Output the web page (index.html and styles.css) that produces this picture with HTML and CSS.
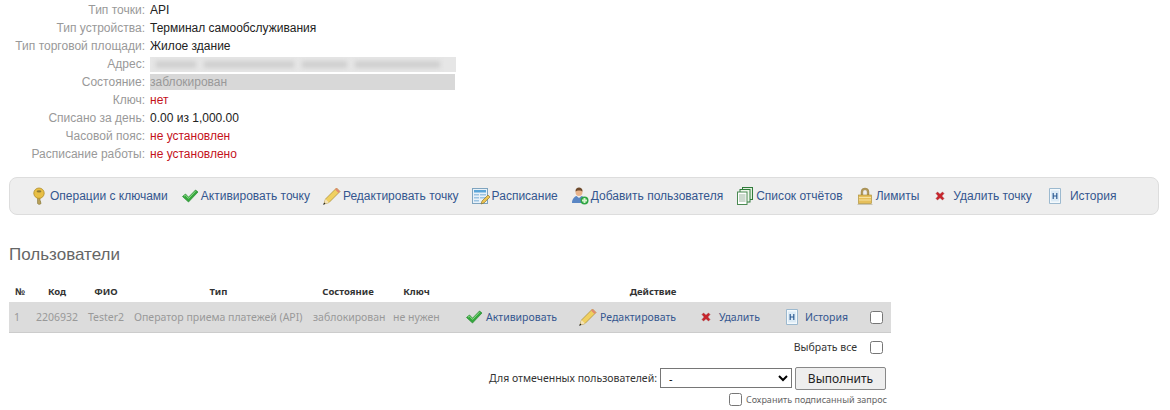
FILE: index.html
```html
<!DOCTYPE html>
<html lang="ru">
<head>
    <meta charset="UTF-8">
    <title>Точка</title>
    <link rel="stylesheet" href="styles.css">
</head>
<body>
    <!-- shared icons -->
    <svg class="defs" width="0" height="0">
        <symbol id="i-key" viewBox="0 0 18 18">
            <path d="M7.5 10v6.5l1.5 1 2-.8v-1.2l-1-.5 1-.7-1-.6V10z" fill="#b8a05a" stroke="#8a7a3c" stroke-width=".6"/>
            <circle cx="9" cy="6.2" r="5.2" fill="#e8bf45" stroke="#b08d28" stroke-width=".8"/>
            <ellipse cx="9" cy="4.4" rx="2.4" ry="1.1" fill="#8f7a35"/>
        </symbol>
        <symbol id="i-check" viewBox="0 0 18 18">
            <path d="M1.5 9.5l3-2.5 3 3.2L14.5 3l2.5 2-9.5 10z" fill="#35a83d" stroke="#2a8a33" stroke-width=".7"/>
            <path d="M3 9.2l1.5-1 3 3.2L14.5 4.2" fill="none" stroke="#8fdc8a" stroke-width="1"/>
        </symbol>
        <symbol id="i-pencil" viewBox="0 0 18 18">
            <path d="M1 17l1.5-5L13.5 1l3.5 3.5L6 15.5z" fill="#f0d060" stroke="#a88a30" stroke-width=".7"/>
            <path d="M13.5 1l3.5 3.5-1.5 1.5L12 2.500z" fill="#e08a70"/>
            <path d="M1 17l1.500-5 3.500 3.500z" fill="#f3e2b8"/>
            <path d="M0 18l2.500-1.200L1.200 15.500z" fill="#222"/>
        </symbol>
        <symbol id="i-table" viewBox="0 0 18 18">
            <rect x=".5" y="1.500" width="15" height="15" fill="#e8f1f8" stroke="#7fa4bf"/>
            <rect x="2" y="3" width="12" height="2.500" fill="#5aa5d8"/>
            <path d="M2 7h5v1.500H2zM8 7h6v1.500H8zM2 10h5v1.500H2zM8 10h6v1.500H8zM2 13h5v1.500H2z" fill="#9cc4e2"/>
            <path d="M9 17l1-3 6-6 2 2-6 6z" fill="#eec450" stroke="#7b6a2c" stroke-width=".6"/>
        </symbol>
        <symbol id="i-user" viewBox="0 0 18 18">
            <ellipse cx="8" cy="5" rx="3.500" ry="4" fill="#e8b48c"/>
            <path d="M4.500 4.500C4.500 1.500 6 .5 8 .5s3.500 1 3.500 4C10 3 6 3 4.500 4.500z" fill="#6e4a2c"/>
            <path d="M1 16c0-4 2.500-6.500 4.500-7L8 11l2.500-2c2 .5 3 2 3.500 4v3z" fill="#5a86c4"/>
            <circle cx="13.500" cy="13.500" r="4" fill="#2fa544"/>
            <path d="M12.500 11h2v1.500H16v2h-1.500V16h-2v-1.500H11v-2h1.500z" fill="#d8f5d0"/>
        </symbol>
        <symbol id="i-list" viewBox="0 0 18 18">
            <rect x="6.500" y=".5" width="10" height="12" fill="#dff0dc" stroke="#2f7a3a"/>
            <rect x="4" y="2.500" width="10" height="12.500" fill="#eef6ec" stroke="#2f7a3a"/>
            <rect x="1.500" y="5" width="9.500" height="12.500" fill="#fff" stroke="#4a8a52"/>
            <path d="M3 8h6.500M3 10h6.500M3 12h6.500M3 14h6.500" stroke="#9ab49e"/>
        </symbol>
        <symbol id="i-lock" viewBox="0 0 18 18">
            <path d="M5 8V5a4 4 0 018 0v3h-1.800V5a2.200 2.200 0 00-4.400 0v3z" fill="#b39a5c" stroke="#8a7436" stroke-width=".4"/>
            <rect x="2.500" y="8" width="13" height="8.500" fill="#e6bf5a" stroke="#a98a30" stroke-width=".6"/>
            <path d="M3 10.500h12M3 13h12" stroke="#f6e2a0"/>
            <path d="M1.500 17.500h15" stroke="#c9c4b4"/>
        </symbol>
        <symbol id="i-del" viewBox="0 0 10 10">
            <path d="M1 2.500L2.500 1 5 3.200 7.500 1 9 2.500 6.800 5 9 7.500 7.500 9 5 6.800 2.500 9 1 7.500 3.200 5z" fill="#c8252c" stroke="#9c1b20" stroke-width=".4"/>
        </symbol>
        <symbol id="i-hist" viewBox="0 0 14 18">
            <path d="M1.500 1.500h11v15h-11z" fill="#f4f9fc" stroke="#9cb9cf"/>
            <path d="M3 3.500h8v11H3z" fill="#dcebf6"/>
            <path d="M5.200 6v6M8.800 6v6M5.200 9h3.600" stroke="#2e5c94" stroke-width="1.200" fill="none"/>
        </symbol>
    </svg>

    <div class="info">
        <div class="info-row"><span class="info-label">Тип точки:</span><span>API</span></div>
        <div class="info-row"><span class="info-label">Тип устройства:</span><span>Терминал самообслуживания</span></div>
        <div class="info-row"><span class="info-label">Тип торговой площади:</span><span>Жилое здание</span></div>
        <div class="info-row">
            <span class="info-label">Адрес:</span>
            <span class="address"><span class="smear"><i></i><i></i><i></i><i></i></span></span>
        </div>
        <div class="info-row"><span class="info-label">Состояние:</span><span class="state">заблокирован</span></div>
        <div class="info-row"><span class="info-label">Ключ:</span><span class="red">нет</span></div>
        <div class="info-row"><span class="info-label">Списано за день:</span><span>0.00 из 1,000.00</span></div>
        <div class="info-row"><span class="info-label">Часовой пояс:</span><span class="red">не установлен</span></div>
        <div class="info-row"><span class="info-label">Расписание работы:</span><span class="red">не установлено</span></div>
    </div>

    <div class="toolbar">
        <a href="#"><svg class="icon"><use href="#i-key"/></svg>Операции с ключами</a>
        <a href="#"><svg class="icon"><use href="#i-check"/></svg>Активировать точку</a>
        <a href="#"><svg class="icon"><use href="#i-pencil"/></svg>Редактировать точку</a>
        <a href="#"><svg class="icon"><use href="#i-table"/></svg>Расписание</a>
        <a href="#"><svg class="icon"><use href="#i-user"/></svg>Добавить пользователя</a>
        <a href="#"><svg class="icon"><use href="#i-list"/></svg>Список отчётов</a>
        <a href="#"><svg class="icon"><use href="#i-lock"/></svg>Лимиты</a>
        <a href="#" class="wide"><svg class="icon-small"><use href="#i-del"/></svg>Удалить точку</a>
        <a href="#" class="wide"><svg class="icon-hist"><use href="#i-hist"/></svg>История</a>
    </div>

    <h2>Пользователи</h2>

    <table class="users">
        <thead>
            <tr>
                <th class="c-num">№</th>
                <th class="c-code">Код</th>
                <th class="c-name">ФИО</th>
                <th class="c-type">Тип</th>
                <th class="c-state">Состояние</th>
                <th class="c-key">Ключ</th>
                <th class="c-act">Действие</th>
                <th class="c-box"></th>
            </tr>
        </thead>
        <tbody>
            <tr>
                <td>1</td>
                <td>2206932</td>
                <td>Tester2</td>
                <td>Оператор приема платежей (API)</td>
                <td>заблокирован</td>
                <td>не нужен</td>
                <td>
                    <div class="actions">
                        <a href="#" class="a-on"><svg class="icon"><use href="#i-check"/></svg>Активировать</a>
                        <a href="#" class="a-edit"><svg class="icon"><use href="#i-pencil"/></svg>Редактировать</a>
                        <a href="#" class="a-del"><svg class="icon-small"><use href="#i-del"/></svg>Удалить</a>
                        <a href="#" class="a-hist"><svg class="icon-hist"><use href="#i-hist"/></svg>История</a>
                    </div>
                </td>
                <td class="c-box"><input type="checkbox"></td>
            </tr>
        </tbody>
    </table>

    <div class="bulk">
        <div class="select-all">Выбрать все <input type="checkbox"></div>
        <div class="bulk-action">
            <label for="bulk-select">Для отмеченных пользователей:</label>
            <select id="bulk-select"><option>-</option></select>
            <button type="button">Выполнить</button>
        </div>
        <div class="signed"><input type="checkbox"> Сохранить подписанный запрос</div>
    </div>
</body>
</html>
```

FILE: styles.css
```css
body {
    margin: 0;
    padding: 1px 0 0;
    font-family: "Liberation Sans", Arial, sans-serif;
    font-size: 12px;
    color: #222222;
    background: #ffffff;
    overflow: hidden;
}

a {
    color: #34568f;
    text-decoration: none;
}

.defs {
    display: block;
    height: 0;
}

.info-row {
    display: flex;
    align-items: center;
    height: 18px;
}

.info-label {
    width: 145px;
    margin-right: 5px;
    text-align: right;
    color: #999999;
    flex: none;
}

.red {
    color: #c4121c;
}

.address {
    width: 306px;
    height: 15px;
    background: #e6e6e6;
    overflow: hidden;
}

.smear {
    display: flex;
    gap: 8px;
    padding: 4px 6px;
    filter: blur(2px);
}

.smear i {
    height: 7px;
    background: #cfcfcf;
}

.smear i:nth-child(1) { width: 40px; }
.smear i:nth-child(2) { width: 90px; }
.smear i:nth-child(3) { width: 45px; }
.smear i:nth-child(4) { width: 85px; }

.state {
    width: 305px;
    height: 16px;
    line-height: 16px;
    background: #d8d8d8;
    color: #999999;
}

.toolbar {
    display: flex;
    align-items: center;
    gap: 13px;
    box-sizing: border-box;
    width: 1150px;
    height: 38px;
    margin: 14px 0 0 9px;
    padding-left: 20px;
    background: #eeeeee;
    border: 1px solid #dddddd;
    border-radius: 8px;
}

.toolbar a {
    display: flex;
    align-items: center;
    gap: 2px;
}

.toolbar a.wide {
    gap: 8px;
    margin-left: 3px;
}

.icon {
    width: 18px;
    height: 18px;
    flex: none;
}

.icon-small {
    width: 10px;
    height: 10px;
    flex: none;
}

.icon-hist {
    width: 14px;
    height: 18px;
    flex: none;
}

h2 {
    margin: 30px 0 0 9px;
    font-size: 17px;
    font-weight: normal;
    line-height: 20px;
    color: #666666;
}

.users {
    width: 882px;
    margin: 16px 0 0 9px;
    border-collapse: collapse;
    table-layout: fixed;
    font-family: "Noto Sans", sans-serif;
    font-size: 10.5px;
}

.users th {
    height: 21px;
    padding: 0;
    font-weight: bold;
    font-size: 9.5px;
    text-align: center;
    color: #333333;
}

.users td {
    height: 30px;
    padding: 0 5px;
    box-sizing: border-box;
    background: #dcdcdc;
    border-bottom: 1px solid #cccccc;
    color: #999999;
    white-space: nowrap;
}

.c-num { width: 22px; }
.c-code { width: 52px; }
.c-name { width: 46px; }
.c-type { width: 179px; }
.c-state { width: 80px; }
.c-key { width: 57px; }
.c-act { width: 416px; }
.c-box { width: 30px; }

input[type="checkbox"] {
    width: 13px;
    height: 13px;
    margin: 0;
    vertical-align: middle;
}

.users td.c-box {
    padding: 0 0 0 9px;
}

.actions {
    display: flex;
    align-items: center;
}

.actions a {
    display: flex;
    align-items: center;
}

.a-on { margin-left: 15px; gap: 3px; }
.a-edit { margin-left: 22px; gap: 3px; }
.a-del { margin-left: 25px; gap: 8px; }
.a-hist { margin-left: 25px; gap: 6px; }

.bulk {
    width: 891px;
    font-family: "Noto Sans", sans-serif;
    font-size: 10.5px;
    color: #333333;
}

.select-all {
    display: flex;
    justify-content: flex-end;
    align-items: center;
    gap: 13px;
    height: 13px;
    margin-top: 8px;
    padding-right: 8px;
}

.bulk-action {
    display: flex;
    justify-content: flex-end;
    align-items: center;
    gap: 3px;
    margin-top: 13px;
    padding-right: 5px;
}

.bulk-action select {
    width: 132px;
    height: 20px;
    padding: 0 4px;
    background: #ffffff;
    border: 1px solid #767676;
    font-family: "Noto Sans", sans-serif;
    font-size: 11px;
}

.bulk-action button {
    width: 91px;
    height: 23px;
    padding: 0;
    background: #eeeeee;
    border: 1px solid #888888;
    border-radius: 2px;
    font-family: "Noto Sans", sans-serif;
    font-size: 12px;
    color: #222222;
}

.signed {
    display: flex;
    justify-content: flex-end;
    align-items: center;
    gap: 4px;
    height: 13px;
    margin-top: 3px;
    padding-right: 4px;
    font-size: 9px;
    color: #666666;
}
```
